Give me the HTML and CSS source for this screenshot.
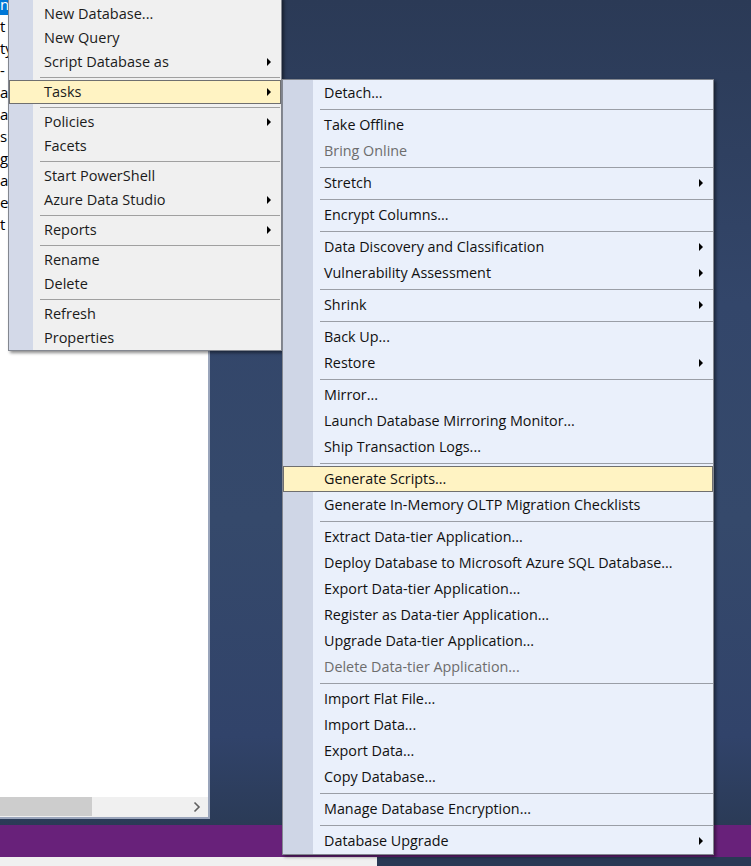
FILE: index.html
```html
<!DOCTYPE html>
<html>
<head>
<meta charset="utf-8">
<link rel="stylesheet" href="styles.css">
</head>
<body>
<div class="screen">
  <div class="main">
    <aside class="explorer">
      <div class="tree">
        <div class="node selected"><span>n</span></div>
        <div class="node">t</div>
        <div class="node">ty</div>
        <div class="node">- (</div>
        <div class="node">a</div>
        <div class="node">as</div>
        <div class="node">s</div>
        <div class="node">g</div>
        <div class="node">a</div>
        <div class="node">e</div>
        <div class="node">t</div>
      </div>
      <div class="hscroll">
        <div class="thumb"></div>
        <div class="track">
          <svg class="scroll-arrow" width="8" height="12" viewBox="0 0 8 12"><path d="M1.5 1.5 L6 6 L1.5 10.5" fill="none" stroke="#606060" stroke-width="1.6"/></svg>
        </div>
      </div>
    </aside>
  </div>
  <div class="statusbar"></div>
  <div class="bottom"><div class="bottom-left"></div></div>

  <div class="menu menu-main">
    <div class="item">New Database...</div>
    <div class="item">New Query</div>
    <div class="item sub">Script Database as</div>
    <div class="sep"></div>
    <div class="item sub active">Tasks</div>
    <div class="sep"></div>
    <div class="item sub">Policies</div>
    <div class="item">Facets</div>
    <div class="sep"></div>
    <div class="item">Start PowerShell</div>
    <div class="item sub">Azure Data Studio</div>
    <div class="sep"></div>
    <div class="item sub">Reports</div>
    <div class="sep"></div>
    <div class="item">Rename</div>
    <div class="item">Delete</div>
    <div class="sep"></div>
    <div class="item">Refresh</div>
    <div class="item">Properties</div>
  </div>

  <div class="menu menu-sub">
    <div class="item">Detach...</div>
    <div class="sep"></div>
    <div class="item">Take Offline</div>
    <div class="item disabled">Bring Online</div>
    <div class="sep"></div>
    <div class="item sub">Stretch</div>
    <div class="sep"></div>
    <div class="item">Encrypt Columns...</div>
    <div class="sep"></div>
    <div class="item sub">Data Discovery and Classification</div>
    <div class="item sub">Vulnerability Assessment</div>
    <div class="sep"></div>
    <div class="item sub">Shrink</div>
    <div class="sep"></div>
    <div class="item">Back Up...</div>
    <div class="item sub">Restore</div>
    <div class="sep"></div>
    <div class="item">Mirror...</div>
    <div class="item">Launch Database Mirroring Monitor...</div>
    <div class="item">Ship Transaction Logs...</div>
    <div class="sep"></div>
    <div class="item active">Generate Scripts...</div>
    <div class="item">Generate In-Memory OLTP Migration Checklists</div>
    <div class="sep"></div>
    <div class="item">Extract Data-tier Application...</div>
    <div class="item">Deploy Database to Microsoft Azure SQL Database...</div>
    <div class="item">Export Data-tier Application...</div>
    <div class="item">Register as Data-tier Application...</div>
    <div class="item">Upgrade Data-tier Application...</div>
    <div class="item disabled">Delete Data-tier Application...</div>
    <div class="sep"></div>
    <div class="item">Import Flat File...</div>
    <div class="item">Import Data...</div>
    <div class="item">Export Data...</div>
    <div class="item">Copy Database...</div>
    <div class="sep"></div>
    <div class="item">Manage Database Encryption...</div>
    <div class="sep"></div>
    <div class="item sub">Database Upgrade</div>
  </div>
</div>
</body>
</html>
```

FILE: styles.css
```css
* { box-sizing: border-box; }
html, body { margin: 0; padding: 0; }
body {
  width: 751px;
  height: 866px;
  overflow: hidden;
  font-family: "Open Sans", "Noto Sans", sans-serif;
  font-size: 14px;
  color: #1a1a1a;
  background: linear-gradient(to bottom, #2b3a56 0%, #33466a 35%, #35496b 60%, #31436a 85%, #2a3a55 96%);
}
.screen {
  position: relative;
  width: 751px;
  height: 866px;
  display: flex;
  flex-direction: column;
  overflow: hidden;
}
.main {
  flex: none;
  height: 825px;
}
.explorer {
  width: 210px;
  height: 819px;
  background: #ffffff;
  border-right: 2px solid #9aa5bb;
  border-bottom: 2px solid #9aa5bb;
  display: flex;
  flex-direction: column;
  overflow: hidden;
}
.tree {
  flex: 1;
  margin-top: -7px;
  display: flex;
  flex-direction: column;
}
.node {
  height: 22px;
  line-height: 22px;
  white-space: nowrap;
  font-size: 15px;
  color: #000;
}
.node.selected span {
  display: inline-block;
  background: #0078d7;
  color: #fff;
  padding-right: 2px;
  line-height: 21px;
}
.hscroll {
  flex: none;
  height: 20px;
  display: flex;
  background: #f0f0f0;
}
.thumb {
  width: 92px;
  height: 19px;
  background: #cdcdcd;
}
.track {
  flex: 1;
  display: flex;
  align-items: center;
  justify-content: flex-end;
  padding-right: 7px;
}
.statusbar {
  flex: none;
  height: 32px;
  background: #68217a;
}
.bottom {
  flex: none;
  height: 9px;
  background: #293955;
}
.bottom-left {
  width: 377px;
  height: 9px;
  background: #f0f0f0;
}

/* menus */
.menu {
  position: absolute;
  display: flex;
  flex-direction: column;
  border: 1px solid #838790;
  box-shadow: 2px 2px 3px rgba(0, 0, 0, 0.45);
}
.menu .item {
  display: flex;
  align-items: center;
  white-space: nowrap;
  flex: none;
  padding-bottom: 2px;
}
.menu .item.sub::after {
  content: "";
  margin-left: auto;
  margin-top: 2px;
  width: 0;
  height: 0;
  border-left: 4px solid #000;
  border-top: 4px solid transparent;
  border-bottom: 4px solid transparent;
}
.menu .item.active {
  background: #fff3c3;
  box-shadow: inset 0 0 0 1px #6f6f6f;
}
.menu .item.disabled { color: #6d6d6d; }
.menu .sep {
  flex: none;
  height: 6px;
  display: flex;
  align-items: center;
}
.menu .sep::before {
  content: "";
  flex: 1;
  height: 1px;
  background: #a0a0a0;
}

.menu-main {
  left: 8px;
  top: -3px;
  width: 274px;
  padding-top: 4px;
  font-size: 14.5px;
  background: linear-gradient(to right, #d3d9e8 0, #d3d9e8 24px, #f0f0f0 24px);
  color: #1b1b1b;
}
.menu-main .item {
  height: 24px;
  padding-left: 35px;
  padding-right: 10px;
}
.menu-main .sep { padding-left: 31px; padding-right: 1px; }

.menu-sub {
  left: 282px;
  top: 79px;
  width: 432px;
  font-size: 14.35px;
  background: linear-gradient(to right, #cfd6e6 0, #cfd6e6 30px, #eaf0fb 30px);
  color: #111;
}
.menu-sub .item {
  height: 26px;
  padding-left: 41px;
  padding-right: 10px;
}
.menu-sub .sep { padding-left: 37px; }
.menu-sub .sep::before { background: #9a9ea6; }
```
